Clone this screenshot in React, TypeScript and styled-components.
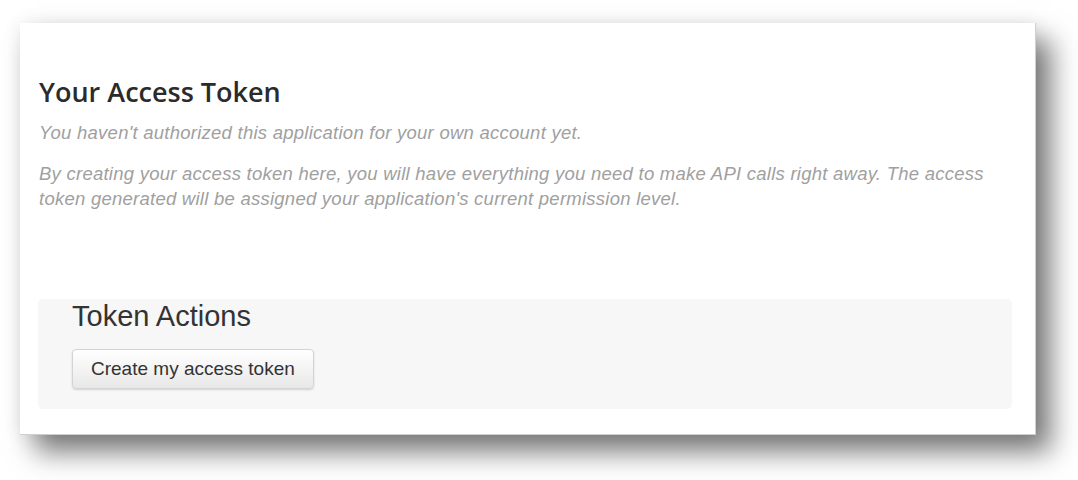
import styled, { createGlobalStyle } from "styled-components";

const Global = createGlobalStyle`
	body {
		margin: 0;
		background: #ffffff;
		font-family: "Liberation Sans", Arial, sans-serif;
	}
`;

/* page */
const Page = styled.div`
	padding: 23px 0 0 20px;
	height: 480px;
	box-sizing: border-box;
	overflow: hidden;
`;

/* white card with the heavy drop shadow */
const Card = styled.section`
	width: 1016px;
	height: 412px;
	box-sizing: border-box;
	background: #ffffff;
	border-right: 1px solid #cfcfcf;
	border-bottom: 1px solid #cfcfcf;
	padding: 51px 40px 0 19px;
	box-shadow: 15px 17px 26px rgba(0, 0, 0, 0.52),
		0 0 18px rgba(0, 0, 0, 0.08);
	display: flex;
	flex-direction: column;
`;

const Title = styled.h2`
	margin: 0;
	font-family: "Open Sans", sans-serif;
	font-weight: 600;
	font-size: 27px;
	line-height: 36px;
	color: #2b2b2b;
`;

const Note = styled.p<{ $gap?: number }>`
	margin: ${(p) => p.$gap ?? 0}px 0 0;
	font-style: italic;
	font-size: 18.5px;
	letter-spacing: 0.25px;
	line-height: 25px;
	color: #a0a0a0;
	max-width: 965px;
`;

/* grey actions well */
const Actions = styled.div`
	margin: 88px 0 0 -1px;
	width: 974px;
	height: 110px;
	box-sizing: border-box;
	background: #f7f7f7;
	border-radius: 5px;
	padding: 0 0 0 34px;
	display: flex;
	flex-direction: column;
	align-items: flex-start;
	gap: 16px;
`;

const ActionsTitle = styled.h3`
	margin: 0;
	font-weight: 400;
	font-size: 29px;
	line-height: 34px;
	color: #333333;
`;

const Button = styled.button`
	font-family: "Liberation Sans", Arial, sans-serif;
	font-size: 19px;
	color: #333333;
	height: 40px;
	padding: 0 18px;
	border: 1px solid #d4d4d4;
	border-radius: 4px;
	background: linear-gradient(#ffffff, #e8e8e8);
	box-shadow: 0 1px 2px rgba(0, 0, 0, 0.15);
	cursor: pointer;
`;

export default function App() {
	return (
		<>
			<Global />
			<Page>
				<Card>
					<Title>Your Access Token</Title>
					<Note $gap={10}>You haven't authorized this application for your own account yet.</Note>
					<Note $gap={16}>
						By creating your access token here, you will have everything you need to make API calls
						right away. The access token generated will be assigned your application's current
						permission level.
					</Note>
					<Actions>
						<ActionsTitle>Token Actions</ActionsTitle>
						<Button>Create my access token</Button>
					</Actions>
				</Card>
			</Page>
		</>
	);
}
